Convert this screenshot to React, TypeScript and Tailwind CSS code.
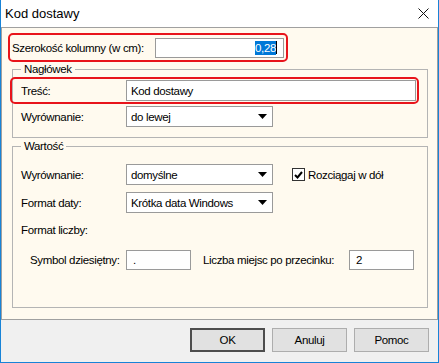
const Arrow = () => (
  <svg width="9" height="5" viewBox="0 0 9 5">
    <polygon points="0,0 9,0 4.5,5" fill="#000" />
  </svg>
);

const Select = ({ value }: { value: string }) => (
  <div className="flex h-[21px] w-[147px] items-center justify-between border border-[#9a9a9a] bg-white pl-[4px] pr-[5px]">
    <span>{value}</span>
    <Arrow />
  </div>
);

const Field = ({ value, w }: { value: string; w: string }) => (
  <div className={`flex h-[20px] items-center border border-[#9a9a9a] bg-white pl-[6px] ${w}`}>
    {value}
  </div>
);

export default function App() {
  return (
    <div className="flex h-[363px] w-[439px] flex-col border-x border-b border-[#1883d7] bg-white font-['Liberation_Sans',Arial,sans-serif] text-[11.5px] leading-[14px] tracking-[-0.35px] text-black">
      <div className="flex h-[27px] shrink-0 items-center justify-between pl-[4px] pr-[9px]">
        <span className="text-[13px] tracking-normal">Kod dostawy</span>
        <svg width="11" height="11" viewBox="0 0 11 11">
          <path d="M0.5 0.5 L10.5 10.5 M10.5 0.5 L0.5 10.5" stroke="#111" strokeWidth="1" />
        </svg>
      </div>

      <div className="flex h-[293px] shrink-0 flex-col border border-[#a0a0a0] bg-[#fffaef]">
        <div className="ml-[6px] mt-[5px] flex h-[29px] w-[280px] items-center rounded-[5px] border-2 border-[#e8141b]">
          <span className="pl-[2px]">Szerokość kolumny (w cm):</span>
          <div className="ml-auto mr-[2px] flex h-[20px] w-[129px] items-center justify-end border border-[#9a9a9a] bg-white pr-[6px]">
            <span className="bg-[#0078d7] text-white">0,28</span>
            <span className="h-[13px] w-px bg-black" />
          </div>
        </div>

        <fieldset className="ml-[10px] w-[416px] border border-[#b4b4b4] pb-[10px]">
          <legend className="ml-[8px] px-[3px]">Nagłówek</legend>
          <div className="-ml-[3px] mt-[1px] flex h-[27px] w-[409px] items-center rounded-[5px] border-2 border-[#e8141b]">
            <span className="w-[114px] pl-[9px]">Treść:</span>
            <div className="flex h-[21px] w-[290px] items-center border border-[#9a9a9a] bg-white pl-[4px]">
              Kod dostawy
            </div>
          </div>
          <div className="mt-[2px] flex items-center">
            <span className="w-[113px] pl-[8px]">Wyrównanie:</span>
            <Select value="do lewej" />
          </div>
        </fieldset>

        <fieldset className="ml-[10px] mt-[1px] w-[416px] border border-[#b4b4b4] pb-[37px]">
          <legend className="ml-[8px] px-[3px]">Wartość</legend>
          <div className="mt-[11px] flex items-center">
            <span className="w-[113px] pl-[8px]">Wyrównanie:</span>
            <Select value="domyślne" />
            <div className="ml-[19px] flex h-[13px] w-[13px] items-center justify-center border-[1.5px] border-[#333] bg-white">
              <svg width="9" height="8" viewBox="0 0 9 8">
                <path d="M1 4 L3.5 6.5 L8 1" stroke="#000" strokeWidth="2" fill="none" />
              </svg>
            </div>
            <span className="ml-[3px]">Rozciągaj w dół</span>
          </div>
          <div className="mt-[7px] flex items-center">
            <span className="w-[113px] pl-[8px]">Format daty:</span>
            <Select value="Krótka data Windows" />
          </div>
          <div className="mt-[10px] pl-[8px]">Format liczby:</div>
          <div className="mt-[13px] flex items-center">
            <span className="w-[113px] pl-[17px]">Symbol dziesiętny:</span>
            <Field value="." w="w-[65px]" />
            <span className="ml-[12px] w-[146px]">Liczba miejsc po przecinku:</span>
            <Field value="2" w="w-[65px]" />
          </div>
        </fieldset>
      </div>

      <div className="flex flex-1 items-start justify-end gap-[7px] bg-[#f0f0f0] pr-[9px] pt-[8px]">
        <button className="flex h-[24px] w-[75px] items-center justify-center border-2 border-[#4d4d4d] bg-[#e1e1e1]">
          OK
        </button>
        <button className="flex h-[24px] w-[75px] items-center justify-center border border-[#adadad] bg-[#e1e1e1]">
          Anuluj
        </button>
        <button className="flex h-[24px] w-[75px] items-center justify-center border border-[#adadad] bg-[#e1e1e1]">
          Pomoc
        </button>
      </div>
    </div>
  );
}
